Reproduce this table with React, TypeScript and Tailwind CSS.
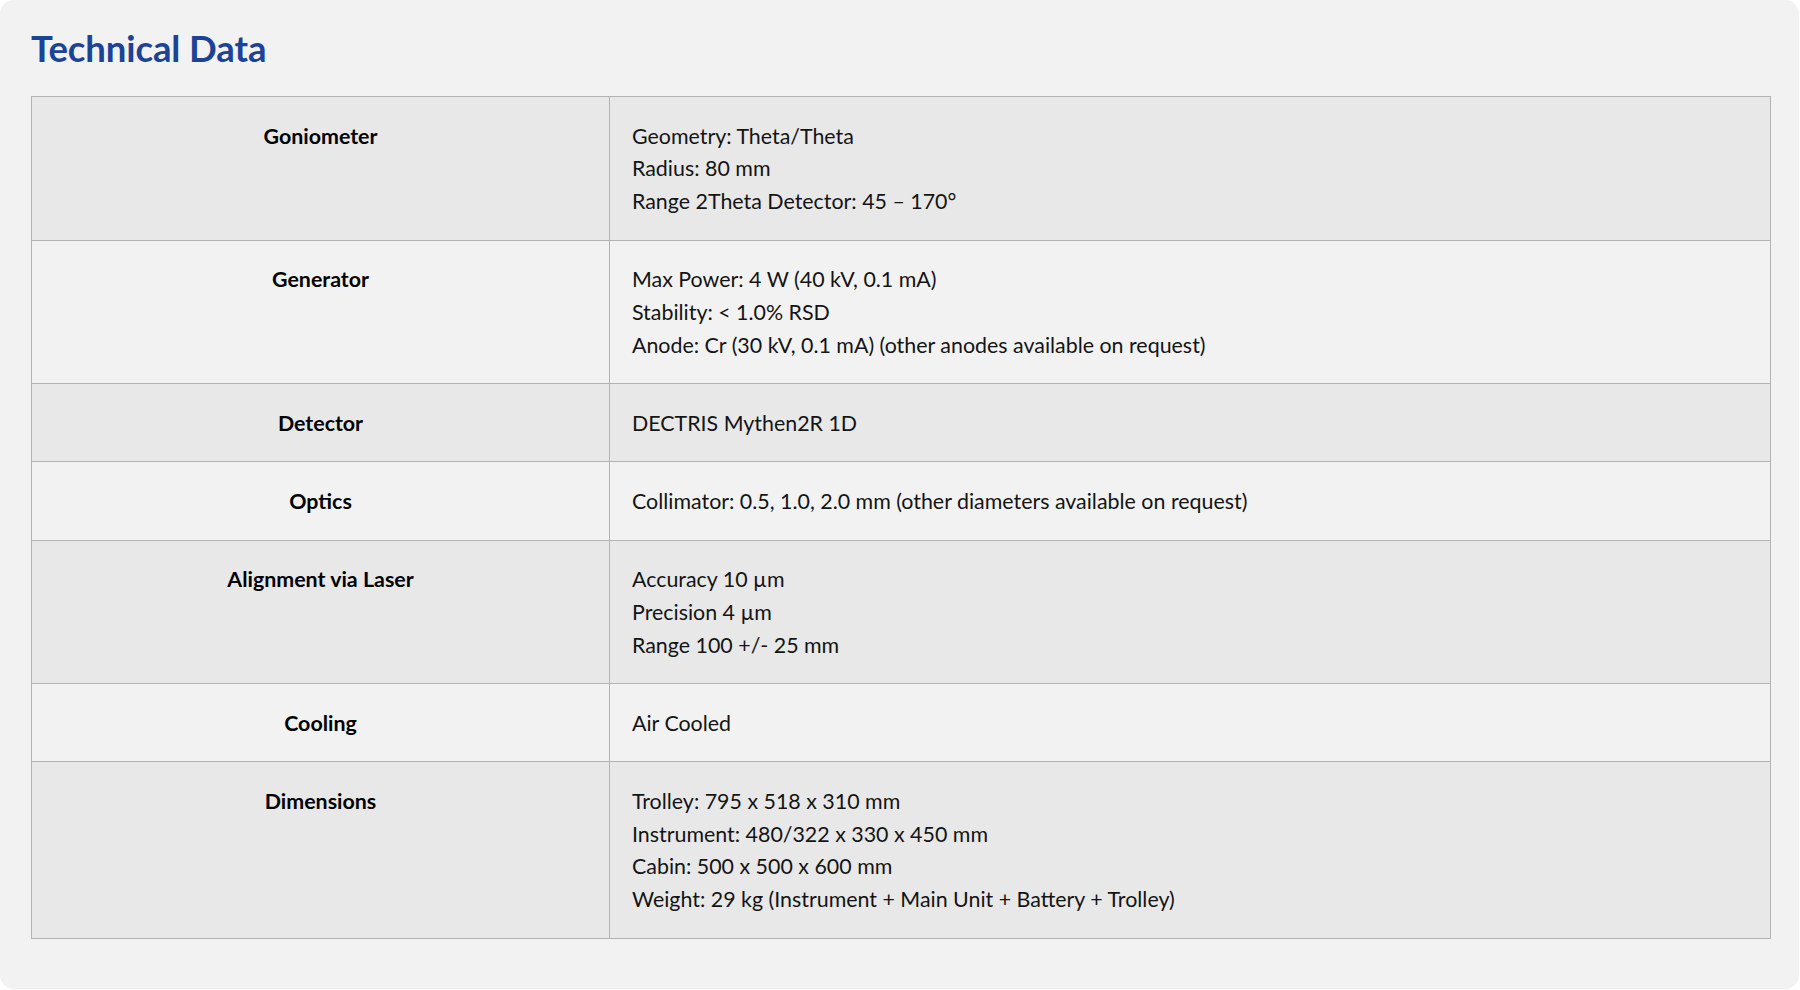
import React from "react";

const rows: { label: string; lines: string[] }[] = [
  { label: "Goniometer", lines: ["Geometry: Theta/Theta", "Radius: 80 mm", "Range 2Theta Detector: 45 – 170°"] },
  { label: "Generator", lines: ["Max Power: 4 W (40 kV, 0.1 mA)", "Stability: < 1.0% RSD", "Anode: Cr (30 kV, 0.1 mA) (other anodes available on request)"] },
  { label: "Detector", lines: ["DECTRIS Mythen2R 1D"] },
  { label: "Optics", lines: ["Collimator: 0.5, 1.0, 2.0 mm (other diameters available on request)"] },
  { label: "Alignment via Laser", lines: ["Accuracy 10 µm", "Precision 4 µm", "Range 100 +/- 25 mm"] },
  { label: "Cooling", lines: ["Air Cooled"] },
  { label: "Dimensions", lines: ["Trolley: 795 x 518 x 310 mm", "Instrument: 480/322 x 330 x 450 mm", "Cabin: 500 x 500 x 600 mm", "Weight: 29 kg (Instrument + Main Unit + Battery + Trolley)"] },
];

export default function App() {
  return (
    <div className="w-[1800px] h-[990px] bg-white" style={{ fontFamily: "Lato, 'Noto Sans', sans-serif" }}>
      <div className="h-[989px] w-[1799px] rounded-[14px] bg-[#f2f2f2] pl-[31px] pr-[28px] pt-[24px]">
        <h2 className="text-[36.5px] leading-[48px] font-bold text-[#1c4396] tracking-[-0.1px]">Technical Data</h2>
        <table className="mt-[24px] w-[1740px] border-collapse border border-[#b3b3b3] text-[21.4px] leading-[32.7px] text-[#141414]">
          <tbody>
            {rows.map((r, i) => (
              <tr key={r.label} className={i % 2 === 0 ? "bg-[#e8e8e8]" : "bg-[#f2f2f2]"}>
                <td className="w-[578px] border border-[#b3b3b3] px-[23px] pt-[22.5px] pb-[22px] text-center align-top font-bold text-black">
                  {r.label}
                </td>
                <td className="border border-[#b3b3b3] px-[22px] pt-[22.5px] pb-[22px] align-top">
                  {r.lines.map((l) => (
                    <div key={l}>{l}</div>
                  ))}
                </td>
              </tr>
            ))}
          </tbody>
        </table>
      </div>
    </div>
  );
}
